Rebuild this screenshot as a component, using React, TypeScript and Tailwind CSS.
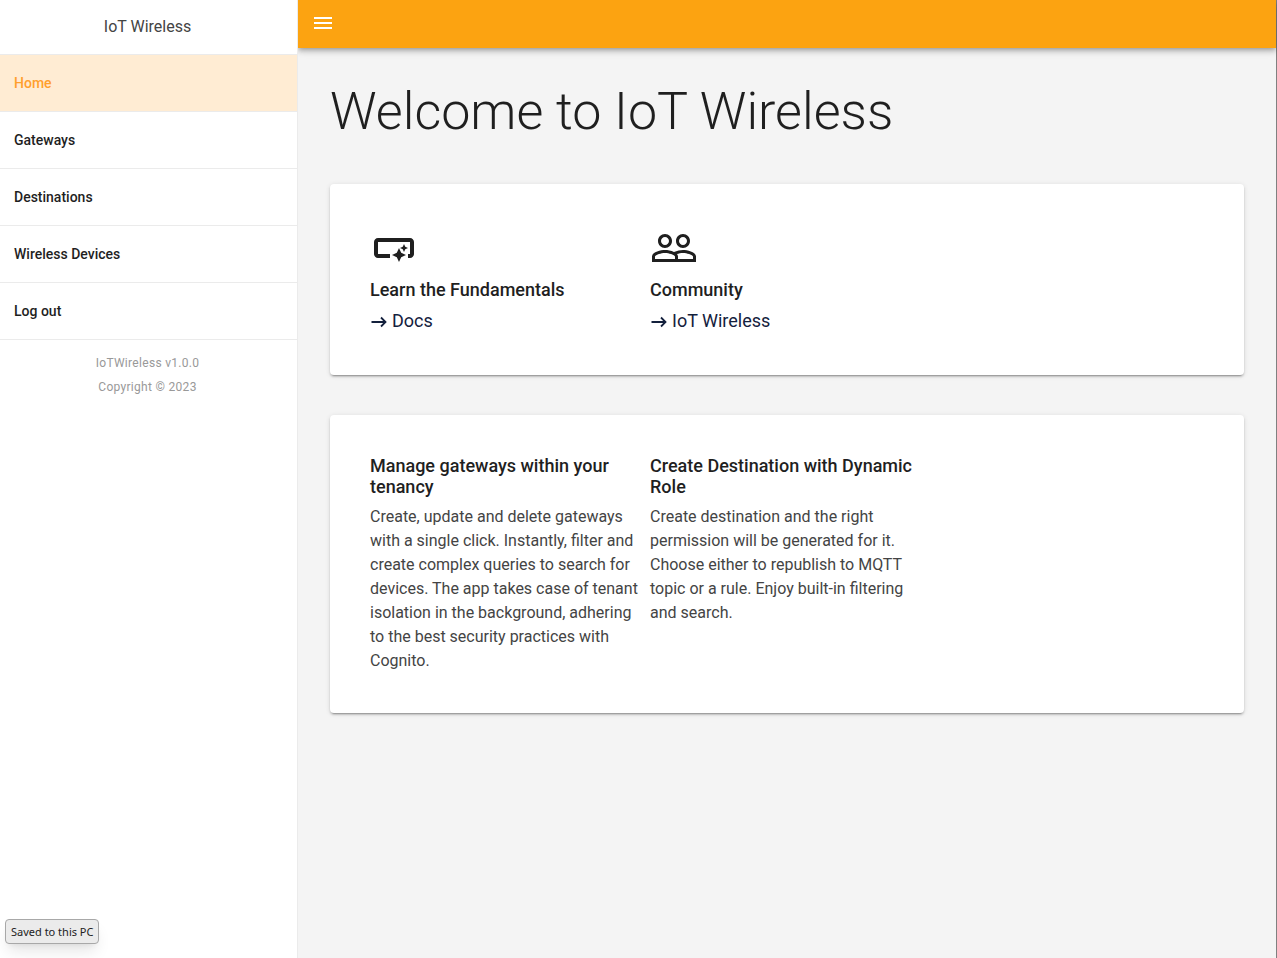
import React from "react";
import { MdMenu } from "react-icons/md";

const NAV = ["Home", "Gateways", "Destinations", "Wireless Devices", "Log out"];

function SmartButtonIcon() {
  return (
    <svg viewBox="0 0 24 24" className="h-12 w-12 text-[#1f1f1f]" fill="currentColor" aria-hidden="true">
      <path d="M22 9v6c0 1.1-.9 2-2 2h-1v-2h1V9H4v6h6v2H4c-1.1 0-2-.9-2-2V9c0-1.1.9-2 2-2h16c1.1 0 2 .9 2 2zm-7.500 10l1.090-2.410L18 15.500l-2.410-1.090L14.500 12l-1.090 2.410L11 15.500l2.410 1.090L14.500 19zm2.500-5l.620-1.380L19 12l-1.380-.620L17 10l-.620 1.380L15 12l1.380.620L17 14z" />
    </svg>
  );
}

function PeopleIcon() {
  return (
    <svg viewBox="0 0 24 24" className="h-12 w-12 text-[#1f1f1f]" fill="currentColor" aria-hidden="true">
      <path d="M16.500 13c-1.200 0-3.070.340-4.500 1-1.430-.670-3.300-1-4.500-1C5.330 13 1 14.080 1 16.250V19h22v-2.750c0-2.170-4.330-3.250-6.500-3.250zm-4 4.500h-10v-1.250c0-.540 2.560-1.750 5-1.750s5 1.210 5 1.750v1.250zm9 0H14v-1.250c0-.460-.200-.860-.520-1.220.880-.300 1.960-.530 3.020-.530 2.440 0 5 1.210 5 1.750v1.250zM7.500 12c1.930 0 3.500-1.570 3.500-3.500S9.430 5 7.500 5 4 6.570 4 8.500 5.570 12 7.500 12zm0-5.500c1.100 0 2 .9 2 2s-.9 2-2 2-2-.9-2-2 .9-2 2-2zm9 5.500c1.930 0 3.500-1.570 3.500-3.500S18.430 5 16.500 5 13 6.570 13 8.500s1.570 3.500 3.500 3.500zm0-5.500c1.100 0 2 .9 2 2s-.9 2-2 2-2-.9-2-2 .9-2 2-2z" />
    </svg>
  );
}

function ArrowIcon() {
  return (
    <svg viewBox="0 0 18 18" className="h-[18px] w-[18px] shrink-0" fill="none" stroke="currentColor" strokeWidth="1.800" aria-hidden="true">
      <path d="M1.500 10h14M11 5.500 15.500 10 11 14.500" />
    </svg>
  );
}

function Resource({ icon, title, link }: { icon: React.ReactNode; title: string; link: string }) {
  return (
    <div className="w-[280px] pb-0.5">
      {icon}
      <h2 className="mt-2 text-lg leading-5 font-medium">{title}</h2>
      <a href="#" className="mt-2 flex items-center gap-1 text-lg leading-[25px] text-[#14213d]">
        <ArrowIcon />
        {link}
      </a>
    </div>
  );
}

function Feature({ title, text }: { title: string; text: string }) {
  return (
    <div className="w-[280px] pr-2">
      <h2 className="text-lg leading-[21px] font-medium">{title}</h2>
      <p className="mt-2 text-base leading-6 text-[#444]">{text}</p>
    </div>
  );
}

const CARD = "rounded-sm bg-white p-10 shadow-[0_3px_1px_-2px_rgba(0,0,0,0.2),0_2px_2px_0_rgba(0,0,0,0.14),0_1px_5px_0_rgba(0,0,0,0.12)]";

export default function App() {
  return (
    <div className="flex min-h-screen bg-[#f4f4f4] text-[#1f1f1f] [font-family:Roboto,'Liberation_Sans',sans-serif]">
      <aside className="relative z-10 flex w-[298px] shrink-0 flex-col border-r border-[#ebebeb] bg-white">
        <div className="flex h-[55px] items-center justify-center border-b border-[#ebebeb] pr-0.5 text-base text-[#444]">IoT Wireless</div>
        <nav>
          {NAV.map((item, i) => (
            <a
              key={item}
              href="#"
              className={
                i === 0
                  ? "flex h-[57px] items-center border-b border-[#ebebeb] bg-[#ffecd3] px-3.5 text-sm font-medium text-[#ff9f2e]"
                  : "flex h-[57px] items-center border-b border-[#ebebeb] px-3.5 text-sm font-medium"
              }
            >
              {item}
            </a>
          ))}
        </nav>
        <div className="pt-[11px] pr-0.5 text-center text-xs leading-6 tracking-wide text-[#999]">
          <p>IoTWireless v1.0.0</p>
          <p>Copyright © 2023</p>
        </div>
        <div role="status" className="mt-auto mb-3.5 ml-[5px] self-start rounded-sm border border-[#a8a8a8] bg-[#ebebeb] px-[5px] text-[11px] leading-[23px] text-[#222] shadow-lg [font-family:'Noto_Sans',sans-serif]">
          Saved to this PC
        </div>
      </aside>
      <div className="flex min-w-0 flex-1 flex-col border-r border-[#808080]">
        <header className="flex h-12 items-center bg-[#fca311] px-[13px] pb-0.5 text-white shadow-[0_2px_4px_-1px_rgba(0,0,0,0.2),0_4px_5px_0_rgba(0,0,0,0.14),0_1px_10px_0_rgba(0,0,0,0.12)]">
          <button type="button" aria-label="Toggle menu">
            <MdMenu className="h-6 w-6" />
          </button>
        </header>
        <main className="px-8 pt-8">
          <h1 className="text-[52px] leading-16 font-light">Welcome to IoT Wireless</h1>
          <section className={`${CARD} mt-10 flex flex-wrap`}>
            <Resource icon={<SmartButtonIcon />} title="Learn the Fundamentals" link="Docs" />
            <Resource icon={<PeopleIcon />} title="Community" link="IoT Wireless" />
          </section>
          <section className={`${CARD} mt-10 flex flex-wrap`}>
            <Feature title="Manage gateways within your tenancy" text="Create, update and delete gateways with a single click. Instantly, filter and create complex queries to search for devices. The app takes case of tenant isolation in the background, adhering to the best security practices with Cognito." />
            <Feature title="Create Destination with Dynamic Role" text="Create destination and the right permission will be generated for it. Choose either to republish to MQTT topic or a rule. Enjoy built-in filtering and search." />
          </section>
        </main>
      </div>
    </div>
  );
}
